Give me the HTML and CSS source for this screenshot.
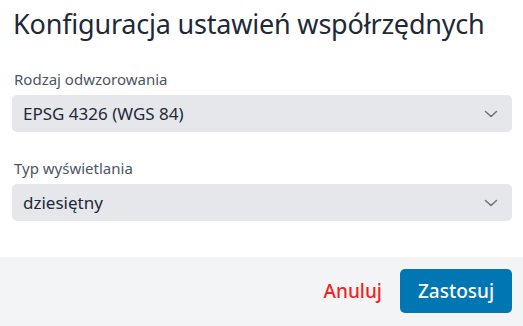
FILE: index.html
```html
<!DOCTYPE html>
<html lang="pl">
<head>
<meta charset="utf-8">
<link rel="stylesheet" href="styles.css">
</head>
<body>
<div class="dialog">
  <div class="content">
    <h1 class="title">Konfiguracja ustawień współrzędnych</h1>
    <div class="field">
      <label class="label">Rodzaj odwzorowania</label>
      <div class="select">
        <span class="value">EPSG 4326 (WGS 84)</span>
        <svg class="chev" width="14" height="8" viewBox="0 0 14 8"><path d="M1.5 1.5 L7 6.5 L12.5 1.5" fill="none" stroke="#6b7280" stroke-width="1.5" stroke-linecap="round" stroke-linejoin="round"/></svg>
      </div>
    </div>
    <div class="field second">
      <label class="label">Typ wyświetlania</label>
      <div class="select">
        <span class="value">dziesiętny</span>
        <svg class="chev" width="14" height="8" viewBox="0 0 14 8"><path d="M1.5 1.5 L7 6.5 L12.5 1.5" fill="none" stroke="#6b7280" stroke-width="1.5" stroke-linecap="round" stroke-linejoin="round"/></svg>
      </div>
    </div>
  </div>
  <div class="footer">
    <button class="btn cancel">Anuluj</button>
    <button class="btn apply">Zastosuj</button>
  </div>
</div>
</body>
</html>
```
FILE: styles.css
```css
* { box-sizing: border-box; }
html, body { margin: 0; padding: 0; background: #fff; }
body { font-family: "Noto Sans", "Open Sans", sans-serif; width: 523px; height: 326px; overflow: hidden; }
.dialog { display: flex; flex-direction: column; height: 326px; }
.content { flex: 1; padding: 4px 11px 0 12px; }
.title { margin: 0; font-size: 27px; font-weight: 400; color: #1f2937; line-height: 40px; padding-left: 1px; letter-spacing: -0.2px; }
.field { margin-top: 25px; }
.field.second { margin-top: 26px; }
.label { display: block; font-size: 15px; color: #4b5563; line-height: 20px; padding-left: 2px; margin-bottom: 6px; }
.select { display: flex; align-items: center; justify-content: space-between; height: 37px; background: #e5e7eb; border-radius: 5px; padding: 0 14px 0 11px; }
.value { font-size: 17px; color: #1f2937; }
.chev { display: block; }
.footer { height: 69px; background: #f3f4f6; display: flex; align-items: center; justify-content: flex-end; gap: 18px; padding: 0 11px 2px 0; }
.btn { font-family: inherit; font-size: 19px; font-weight: 500; border: none; cursor: pointer; }
.cancel { background: none; color: #ef2323; padding: 0; }
.apply { background: #0077b3; color: #fff; height: 44px; width: 112px; border-radius: 5px; }
```
